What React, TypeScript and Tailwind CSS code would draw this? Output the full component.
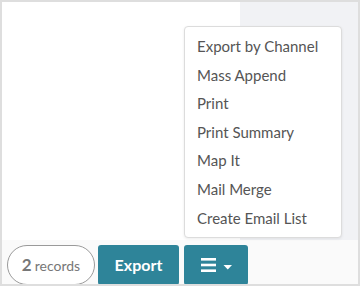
const MENU_ITEMS = [
    "Export by Channel",
    "Mass Append",
    "Print",
    "Print Summary",
    "Map It",
    "Mail Merge",
    "Create Email List",
];

function MenuIcon() {
    return (
        <svg width="32" height="14" viewBox="0 0 32 14">
            <rect x="0" y="0" width="15" height="2.6" fill="#fff" />
            <rect x="0" y="5.7" width="15" height="2.6" fill="#fff" />
            <rect x="0" y="11.4" width="15" height="2.6" fill="#fff" />
            <path d="M22.5 7 L31 7 L26.75 11.5 Z" fill="#fff" />
        </svg>
    );
}

export default function App() {
    return (
        <div
            className="relative w-[360px] h-[286px] overflow-hidden border-2 border-[#dedede] bg-white"
            style={{ fontFamily: "Lato, 'Open Sans', sans-serif" }}
        >
            <div className="flex h-[238px]">
                <div className="w-[238px] bg-white" />
                <div className="flex-1 bg-[#f1f2f5]" />
            </div>

            <div className="flex h-[44px] items-start gap-[3px] bg-[#fafafa] pl-[5px] pt-[5px]">
                <div className="flex h-[40px] w-[88px] items-center justify-center rounded-full border border-[#9a9a9a] bg-white text-[#777]">
                    <span className="text-[17px] font-bold">2</span>
                    <span className="ml-[3px] text-[14px]">records</span>
                </div>
                <button className="flex h-[40px] w-[81px] items-center justify-center rounded-[3px] bg-[#2e8499] text-[16px] font-bold text-white">
                    Export
                </button>
                <button className="ml-[2px] flex h-[40px] w-[64px] items-center justify-center rounded-[3px] bg-[#2e8499] pl-[1px]">
                    <MenuIcon />
                </button>
            </div>

            <div className="absolute left-[182px] top-[24px] w-[158px] rounded-[4px] border border-[#dcdcdc] bg-white py-[5px] shadow-[0_1px_3px_rgba(0,0,0,0.08)]">
                {MENU_ITEMS.map((item) => (
                    <div
                        key={item}
                        className="flex h-[28.6px] items-center pl-[12px] text-[15px] text-[#555]"
                    >
                        {item}
                    </div>
                ))}
            </div>
        </div>
    );
}
